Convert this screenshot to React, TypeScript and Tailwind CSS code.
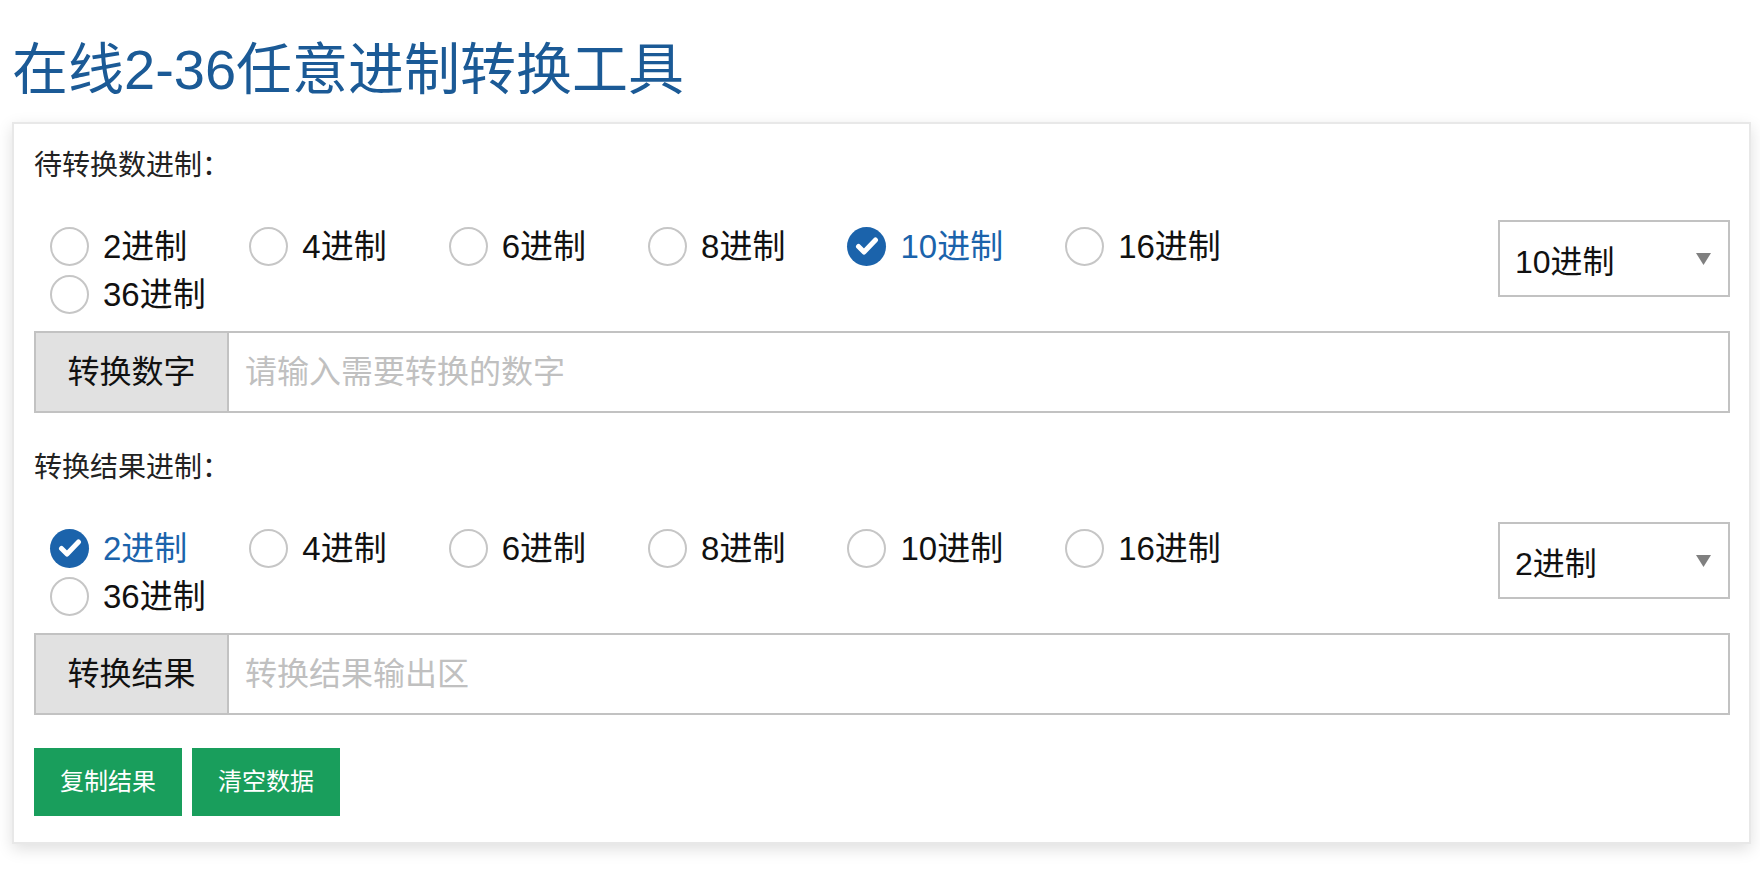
import { useState } from 'react';

const bases = [2, 4, 6, 8, 10, 16, 36];

function convert(value: string, from: number, to: number) {
  const v = value.trim().toLowerCase();
  if (!v) return '';
  const digits = '0123456789abcdefghijklmnopqrstuvwxyz';
  let n = 0n;
  for (const ch of v) {
    const d = digits.indexOf(ch);
    if (d < 0 || d >= from) return '输入有误';
    n = n * BigInt(from) + BigInt(d);
  }
  return n.toString(to);
}

function Radio({ checked, label, onClick }: { checked: boolean; label: string; onClick: () => void }) {
  return (
    <button type="button" onClick={onClick} className="h-[48px] flex items-center mr-[62px] cursor-pointer">
      {checked ? (
        <span className="w-[39px] h-[39px] rounded-full bg-[#1b63ab] flex items-center justify-center">
          <svg width="24" height="20" viewBox="0 0 24 20" fill="none" stroke="white" strokeWidth="5" strokeLinecap="round" strokeLinejoin="round">
            <path d="M3.5 10.5l5.5 5.5L20.5 4" />
          </svg>
        </span>
      ) : (
        <span className="w-[39px] h-[39px] rounded-full border-2 border-[#c6c6c6] bg-white" />
      )}
      <span className={`ml-[14px] text-[33px] leading-none ${checked ? 'text-[#1b63ab]' : 'text-[#111]'}`}>{label}</span>
    </button>
  );
}

function BasePicker({ value, onChange }: { value: number; onChange: (b: number) => void }) {
  return (
    <div className="flex items-start justify-between">
      <div className="w-[1300px] flex flex-wrap pl-[16px] pt-[2px]">
        {bases.map((b) => (
          <Radio key={b} checked={b === value} label={`${b}进制`} onClick={() => onChange(b)} />
        ))}
      </div>
      <div className="relative w-[232px] h-[77px]">
        <select
          value={value}
          onChange={(e) => onChange(Number(e.target.value))}
          className="appearance-none w-full h-full border-2 border-[#c2c2c2] bg-white pl-[15px] pt-[7px] text-[32px] text-[#111] outline-none"
        >
          {bases.map((b) => (
            <option key={b} value={b}>{b}进制</option>
          ))}
        </select>
        <svg className="absolute right-[19px] top-[33px] pointer-events-none" width="15" height="12" viewBox="0 0 15 12">
          <path d="M0 0h15L7.5 12z" fill="#808080" />
        </svg>
      </div>
    </div>
  );
}

function InputGroup({ addon, placeholder, value, onChange, readOnly }: {
  addon: string; placeholder: string; value: string; onChange?: (v: string) => void; readOnly?: boolean;
}) {
  return (
    <div className="mt-[13px] h-[82px] flex border-2 border-[#c2c2c2]">
      <div className="w-[193px] bg-[#e1e1e1] border-r-2 border-[#c2c2c2] flex items-center justify-center text-[32px] text-[#111]">
        {addon}
      </div>
      <input
        value={value}
        readOnly={readOnly}
        onChange={(e) => onChange?.(e.target.value)}
        placeholder={placeholder}
        className="flex-1 pl-[16px] text-[32px] text-[#111] placeholder:text-[#c0c0c0] outline-none bg-white"
      />
    </div>
  );
}

export default function App() {
  const [from, setFrom] = useState(10);
  const [to, setTo] = useState(2);
  const [num, setNum] = useState('');
  const result = convert(num, from, to);

  return (
    <div className="min-h-screen bg-white font-['Liberation_Sans','Noto_Sans_CJK_SC',sans-serif]">
      <h1 className="h-[122px] flex items-center pl-[12px] pt-[18px] text-[56px] font-normal text-[#1b5a96]">
        在线2-36任意进制转换工具
      </h1>
      <div className="ml-[12px] w-[1739px] border-2 border-[#e8e8e8] bg-white shadow-[0_5px_15px_rgba(0,0,0,0.13)] pl-[20px] pr-[19px] pt-[22px] pb-[26px]">
        <div className="h-[40px] flex items-center text-[28px] text-[#222]">待转换数进制：</div>
        <div className="mt-[34px]">
          <BasePicker value={from} onChange={setFrom} />
        </div>
        <InputGroup addon="转换数字" placeholder="请输入需要转换的数字" value={num} onChange={setNum} />

        <div className="mt-[35px] h-[40px] flex items-center text-[28px] text-[#222]">转换结果进制：</div>
        <div className="mt-[34px]">
          <BasePicker value={to} onChange={setTo} />
        </div>
        <InputGroup addon="转换结果" placeholder="转换结果输出区" value={result} readOnly />

        <div className="mt-[33px] flex gap-[10px]">
          <button
            type="button"
            onClick={() => navigator.clipboard?.writeText(result)}
            className="w-[148px] h-[68px] bg-[#199e5c] text-white text-[24px]"
          >
            复制结果
          </button>
          <button
            type="button"
            onClick={() => setNum('')}
            className="w-[148px] h-[68px] bg-[#199e5c] text-white text-[24px]"
          >
            清空数据
          </button>
        </div>
      </div>
    </div>
  );
}
